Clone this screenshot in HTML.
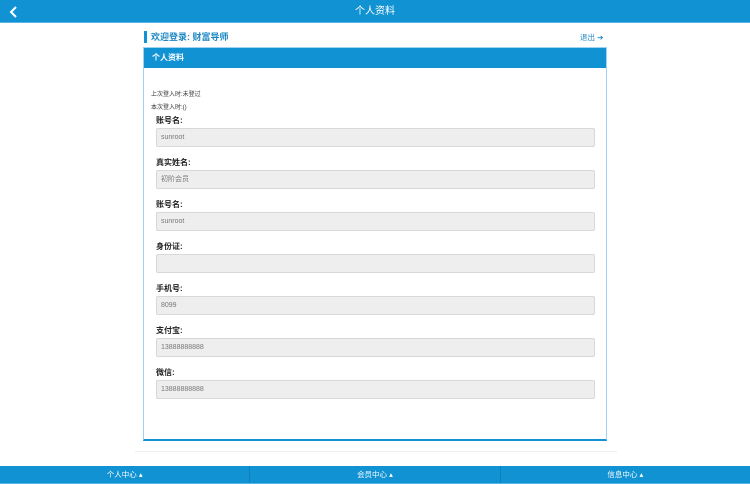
<!DOCTYPE html>
<html><head><meta charset="utf-8"><style>
*{margin:0;padding:0;box-sizing:border-box}
body{width:750px;height:484px;background:#fff;font-family:"Liberation Sans","Noto Sans CJK SC",sans-serif;position:relative;overflow:hidden}
.top{position:absolute;left:0;top:0;width:750px;height:23px;background:#1192d3;border-bottom:1px solid #5ab4e6;color:#fff;font-size:10px;text-align:center;line-height:23px}
.top svg{position:absolute;left:9px;top:6px}
.wel{position:absolute;left:144px;top:31px;height:12px;border-left:3px solid #1192d3;padding-left:4px;font-size:9px;color:#1a86c4;line-height:12px;font-weight:bold}
.out{position:absolute;left:580px;top:32px;font-size:7.5px;color:#1a86c4}
.panel{position:absolute;left:143px;top:47px;width:464px;height:394px;border:1px solid #9fd3f0;border-bottom:2px solid #1192d3}
.ph{height:20px;background:#1192d3;color:#fff;font-size:8px;line-height:20px;padding-left:8px;font-weight:bold}
.small{position:absolute;left:7px;font-size:6px;color:#333}
.lab{position:absolute;left:12px;font-size:8px;color:#222;font-weight:bold}
.inp{position:absolute;left:12px;width:439px;height:19px;background:#eee;border:1px solid #d8d8d8;border-radius:2px;font-size:7px;color:#777;line-height:17px;padding-left:4px}
.hr{position:absolute;left:135px;top:451px;width:482px;border-top:1px solid #eee}
.bot{position:absolute;left:0;top:466px;width:750px;height:18px;background:#1192d3;border-bottom:1px solid #5ab4e6;display:flex}
.bot div{flex:1;color:#fff;font-size:7.5px;text-align:center;line-height:17px;border-right:1px solid #0e7fb8}
</style></head><body>
<div class="top"><svg width="9" height="12" viewBox="0 0 9 12"><path d="M7 1L2 6l5 5" stroke="#fff" stroke-width="2" fill="none"/></svg>个人资料</div>
<div class="wel">欢迎登录: 财富导师</div>
<div class="out">退出 ➔</div>
<div class="panel"><div class="ph">个人资料</div>
<div class="small" style="top:41px">上次登入时:未登过</div>
<div class="small" style="top:54px">本次登入时:()</div>
<div class="lab" style="top:67px">账号名:</div><div class="inp" style="top:80px">sunroot</div>
<div class="lab" style="top:109px">真实姓名:</div><div class="inp" style="top:122px">初阶会员</div>
<div class="lab" style="top:151px">账号名:</div><div class="inp" style="top:164px">sunroot</div>
<div class="lab" style="top:193px">身份证:</div><div class="inp" style="top:206px"></div>
<div class="lab" style="top:235px">手机号:</div><div class="inp" style="top:248px">8099</div>
<div class="lab" style="top:277px">支付宝:</div><div class="inp" style="top:290px">13888888888</div>
<div class="lab" style="top:319px">微信:</div><div class="inp" style="top:332px">13888888888</div>
</div>
<div class="hr"></div>
<div class="bot"><div>个人中心 ▴</div><div>会员中心 ▴</div><div style="border:none">信息中心 ▴</div></div>
</body></html>
